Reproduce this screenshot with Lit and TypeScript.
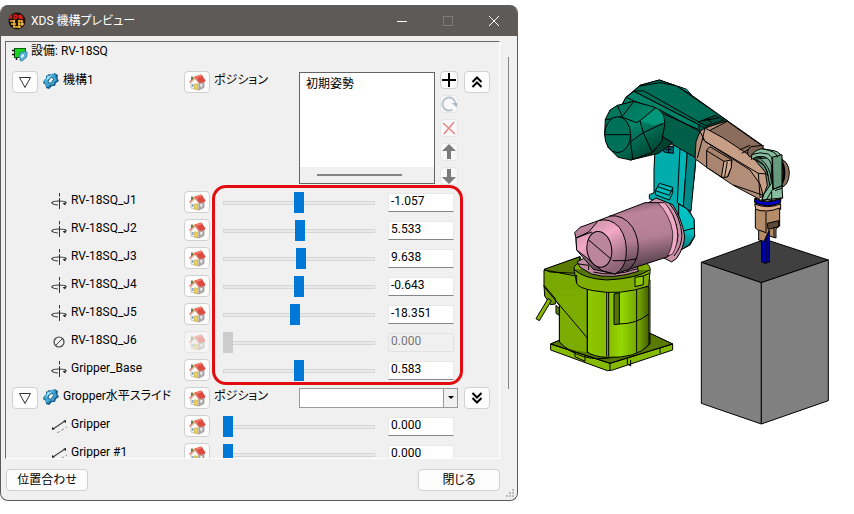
import { LitElement, html, css, svg } from "lit";
import { customElement } from "lit/decorators.js";

type Joint = { name: string; kind: "rotate" | "slide" | "fixed"; value: string; min: number; disabled?: boolean };

const armJoints: Joint[] = [
  { name: "RV-18SQ_J1", kind: "rotate", value: "-1.057", min: -360 },
  { name: "RV-18SQ_J2", kind: "rotate", value: "5.533", min: -360 },
  { name: "RV-18SQ_J3", kind: "rotate", value: "9.638", min: -360 },
  { name: "RV-18SQ_J4", kind: "rotate", value: "-0.643", min: -360 },
  { name: "RV-18SQ_J5", kind: "rotate", value: "-18.351", min: -360 },
  { name: "RV-18SQ_J6", kind: "fixed", value: "0.000", min: 0, disabled: true },
  { name: "Gripper_Base", kind: "rotate", value: "0.583", min: -360 },
];
const gripperJoints: Joint[] = [
  { name: "Gripper", kind: "slide", value: "0.000", min: 0 },
  { name: "Gripper #1", kind: "slide", value: "0.000", min: 0 },
];

const icon = (size: number, body: unknown) =>
  html`<svg width=${size} height=${size} viewBox="0 0 ${size} ${size}" aria-hidden="true">${body}</svg>`;

const homeIcon = icon(18, svg`
  <path d="M3 10L7 5.500L11 10V17L3 15Z" fill="#fbf8f2" stroke="#b9b4ab" stroke-width=".8"/>
  <path d="M11 17V9.500L16 8.500V14.500Z" fill="#b3afaa" stroke="#8c8782" stroke-width=".6"/>
  <path d="M6.500 11H9.500V16.800L6.500 16Z" fill="#f0d257" stroke="#b99a2a" stroke-width=".5"/>
  <rect x="3.800" y="11" width="1.800" height="3" fill="#8aa9d6"/>
  <rect x="12.300" y="11" width="2" height="2.500" fill="#eef0f5"/>
  <path d="M7 3.500L13.500 1.500L17.500 7.500L16.500 9L11.500 10Z" fill="#de4a3e"/>
  <path d="M7 3.500L13.500 1.500L14.500 3L8.500 5.500Z" fill="#ee7767"/>
  <path d="M1.500 9.500L7 4L11.500 10" fill="none" stroke="#e2745f" stroke-width="1.300"/>
  <path d="M3 3.500h2v2.500l-2 2z" fill="#73833b"/>`);
const rotateIcon = icon(16, svg`
  <path d="M8.500 0V3.500M8.500 5V16" stroke="#333" fill="none"/>
  <path d="M7 12Q1 11.500 .800 9.800Q1.500 8 8 8Q14.500 8 15.200 9.500Q15 10.500 13 11" stroke="#333" fill="none" stroke-width="1.200"/>
  <path d="M11.500 10.500L14.500 9.500V12.500Z" fill="#222"/>`);
const fixedIcon = icon(16, svg`
  <circle cx="8" cy="9" r="5" fill="none" stroke="#444" stroke-width="1.200"/><path d="M4.500 12.500L11.500 5.500" stroke="#444"/>`);
const slideIcon = icon(16, svg`
  <path d="M2 12L14 4" stroke="#444" stroke-width="1.200"/><path d="M1 13v-3l3 2zM15 3v3l-3-2z" fill="#222"/>
  <path d="M6 16L16 10" stroke="#888" stroke-dasharray="3 2"/>`);
const gearIcon = icon(16, svg`
  <path d="M6 1L9 2L11.500 0L15 2L14.500 5L16 8L13 10L12 13L9 13L6 16L3 15L3 12L0 10L1 7L3 6L3 3Z" fill="#17608c"/>
  <path d="M4 2L7 2.500L9.500 .500L12.500 1.500L12.500 4.500L14 7L11.500 9L10.500 12L7.500 11.500L5 14L2 13L2.500 10.500L.500 8.500L2 6L3.500 5Z" fill="#3fa6d2"/>
  <path d="M4.500 3.500L9 2.500L6 5.500L3 8Z" fill="#a9e3f4"/>
  <ellipse cx="7.800" cy="7.300" rx="2" ry="3.200" transform="rotate(40 7.800 7.300)" fill="#efefef" stroke="#0e5077" stroke-width=".8"/>`);
const equipmentIcon = icon(16, svg`
  <rect x="2.500" y="2.500" width="11" height="9" fill="#18d41c" stroke="#075c0b"/>
  <path d="M0 4.500h3M0 8.500h3M4.500 12v2" stroke="#111" stroke-width="1.500"/>
  <path d="M9 5.500l2 1 2-1.500 2 1v3l-1 3-2 1-1.500 2-2.500-.500v-2.500l-1.500-1.500 1-2z" fill="#58b3d6" stroke="#2d6f8f" stroke-width=".7"/>
  <ellipse cx="10.500" cy="10" rx="1.200" ry="2" transform="rotate(35 10.500 10)" fill="#e6f5fa"/>`);
const appIcon = icon(18, svg`
  <circle cx="9" cy="9" r="8.500" fill="#1c1109"/>
  <path d="M1.500 3.500l2.500 3M4 3.500l-2.500 3M6 3v3.500h2l1-2-1-1.500zM14 3.500h-3v1.500h3v1.500h-3" stroke="#e01b1b" stroke-width="1.300" fill="none"/>
  <path d="M2 9h5M10 9h5M3 12h5M6 8v7M11 8v8M10 12h6M5 15h8M14 9v5" stroke="#f2b832" stroke-width="1.500" fill="none"/>`);
const triangleIcon = icon(14, svg`<path d="M1.500 1.500H12.500L7 11.500Z" fill="#fff" stroke="#333"/>`);
const upChevrons = icon(14, svg`<path d="M2.500 7L7 2.500L11.500 7M2.500 12L7 7.500L11.500 12" fill="none" stroke="#000" stroke-width="2"/>`);
const downChevrons = icon(14, svg`<path d="M2.500 2L7 6.500L11.500 2M2.500 7L7 11.500L11.500 7" fill="none" stroke="#000" stroke-width="2"/>`);

const tools = [
  { label: "追加", off: false, body: svg`<path d="M8 1V15M1 8H15" stroke="#000" stroke-width="2"/>` },
  { label: "更新", off: true, body: svg`<path d="M11.500 13.500A6.500 6.500 0 1 1 14.500 7.500" fill="none" stroke="#b6c2ce" stroke-width="2"/><path d="M10.500 7H16V11.500Z" fill="#a9b8c6"/>` },
  { label: "削除", off: true, body: svg`<path d="M2 3L14 14M13 2L3 14" stroke="#e48686" stroke-width="1.500"/>` },
  { label: "上へ", off: true, body: svg`<path d="M8 0L15 7H10V15H6V7H1Z" fill="#7b7b7b"/>` },
  { label: "下へ", off: true, body: svg`<path d="M8 16L15 9H10V1H6V9H1Z" fill="#7b7b7b"/>` },
];

@customElement("robot-scene")
class RobotScene extends LitElement {
  static styles = css`
    :host { display: block; }
    .scene { display: block; width: 100%; height: auto; }
    .ink { stroke: #000; stroke-width: 3; stroke-linejoin: round; }
    .line { fill: none; }
  `;
  render() {
    return html`<svg class="scene" viewBox="518 0 336 514" role="img" aria-label="RV-18SQ">
      <defs>
        <linearGradient id="lime"><stop offset="0" stop-color="#8fc800"/><stop offset=".35" stop-color="#86ba00"/><stop offset=".55" stop-color="#94d800"/><stop offset=".85" stop-color="#6e9c00"/><stop offset="1" stop-color="#455f00"/></linearGradient>
        <linearGradient id="pink" x1="0" y1="0" x2=".25" y2="1"><stop offset="0" stop-color="#604450"/><stop offset=".28" stop-color="#bd8499"/><stop offset=".62" stop-color="#b57f93"/><stop offset="1" stop-color="#56404a"/></linearGradient>
        <linearGradient id="rose" x1="0" y1="0" x2=".5" y2="1"><stop offset="0" stop-color="#b9869a"/><stop offset=".45" stop-color="#f4a9c5"/><stop offset="1" stop-color="#8f6575"/></linearGradient>
        <linearGradient id="teal" x1="0" y1="0" x2=".7" y2="1"><stop offset="0" stop-color="#006b54"/><stop offset=".5" stop-color="#008468"/><stop offset="1" stop-color="#00412f"/></linearGradient>
        <linearGradient id="cyan" x1="0" y1="0" x2="0" y2="1"><stop offset="0" stop-color="#00c6c6"/><stop offset=".6" stop-color="#00bcbc"/><stop offset="1" stop-color="#006c6c"/></linearGradient>
      </defs>

      <g transform="translate(590 70) scale(.33333)" class="ink">
        <path d="M262 48L290 58L305 76L280 66Z" fill="#0aa"/>
        <path d="M195 235L270 225L318 262L314 310L300 426L312 450L314 500L300 525L262 545L230 410L178 386V374L192 368V300Z" fill="#00acac"/>
        <path d="M270 232L292 245L280 410L262 398Z" fill="#00b6b6"/>
        <path d="M292 245L318 262L303 424L280 410Z" fill="#008989"/>
        <path d="M266 402L290 416L312 446L314 498L296 526L266 544Z" fill="url(#cyan)"/>
        <path d="M282 482L314 474" class="line"/>
        <path d="M196 362L208 340L248 352V368L238 390L196 374Z" fill="#00baba"/>
        <path d="M196 362L238 376L248 354M204 350L244 364" class="line"/>
        <path d="M215 232L250 230V250L222 246ZM225 238H245M236 232V250" fill="#067"/>
      </g>

      <g transform="translate(530 190) scale(.33333)" class="ink">
        <path d="M62 462L90 450L360 430L428 462V480L245 541L232 542L62 480Z" fill="#86ba00"/>
        <path d="M62 462L90 450L360 430L428 462L240 520Z" fill="#587a00"/>
        <path d="M62 462L240 520L428 462M240 520V541M135 486V500L165 514V498M292 505V522L302 528V510M390 474V490" class="line"/>
        <path d="M42 240L150 200L180 290L180 470L90 456L88 346L42 288Z" fill="#79a800"/>
        <path d="M42 238L150 200L140 250L60 246Z" fill="#587b00"/>
        <path d="M42 240L138 258" class="line"/>
        <path d="M42 286L76 326V342L62 344L44 318Z" fill="#719b00"/>
        <path d="M54 326L64 332L28 392L18 386Z" fill="#87b900"/>
        <path d="M78 346L88 356V376L78 370Z" fill="#668d00"/>
        <path d="M88 296L172 298V486Q110 482 90 456Z" fill="#7cac00" stroke="none"/>
        <path d="M88 346V456Q150 520 250 502Q330 494 360 462V270H140" class="line"/>
        <path d="M172 290H357V464Q320 506 230 502Q190 500 172 486Z" fill="url(#lime)"/>
        <path d="M42 290L172 444M172 290V488M230 304V500M236 304V500M320 292V488" class="line"/>
        <path d="M252 312L268 308V402L252 404Z" fill="#547500"/>
        <path d="M268 402Q320 402 356 372" class="line"/>
        <path d="M132 238Q132 220 155 218L345 218Q364 226 360 246L356 288Q270 318 190 302Q145 294 140 280Z" fill="#7fae00"/>
        <path d="M132 238Q160 266 230 270Q320 266 358 240" fill="#547600"/>
        <path d="M140 255V280M315 262L340 258V284L315 290ZM340 258L358 250" fill="#8fc900"/>
        <path d="M142 215L160 206L320 220L325 244Q245 270 185 252L150 232Z" fill="#bf8ca0"/>
        <path d="M146 222L176 226V240M190 246Q250 262 322 236" class="line"/>

        <path d="M350 42L378 24L428 44Q455 85 464 138Q462 174 440 205L425 216L398 202Z" fill="#ca92a8"/>
        <path d="M138 145L134 128L150 112L205 92L345 38L400 38Q438 70 444 136Q442 176 414 200L255 252L190 238L140 180Z" fill="url(#pink)"/>
        <path d="M384 38Q420 76 428 126Q430 170 412 198L428 192Q446 160 442 122Q434 72 404 38Z" fill="#f2a9c5" stroke-width="2"/>
        <path d="M418 40Q452 80 456 136Q454 172 432 198" class="line"/>
        <path d="M238 78Q280 72 308 112Q328 148 324 186Q318 224 290 244" class="line"/>
        <path d="M205 92Q240 82 268 112Q294 148 288 200Q284 236 255 252L216 242L172 205L140 180L138 144L176 126Z" fill="url(#rose)"/>
        <ellipse cx="208" cy="178" rx="37" ry="54" fill="#bb859a" transform="rotate(-8 208 178)"/>
        <path d="M174 148L244 208M138 144L186 126M248 212H288M288 212L322 206" class="line"/>
      </g>

      <g transform="translate(590 70) scale(.33333)" class="ink">
        <path d="M96 104L108 82L150 46L208 30L260 48L300 72L412 152L330 190L318 264L246 222L122 270L170 160Z" fill="#005f49"/>
        <path d="M132 64L150 46L208 30L260 48L412 152L344 174L326 164Z" fill="#006e56"/>
        <path d="M96 104L108 82L132 64L326 164L328 184L210 120L130 94Z" fill="#008168"/>
        <path d="M108 82L325 178M132 64L160 62L330 158M150 48L210 38L254 46" class="line"/>
        <path d="M325 156L375 136L402 150L348 168ZM338 152L385 144M350 146L366 158" fill="#00503f"/>
        <path d="M190 246L218 200L248 218L206 250L122 270Z" fill="#00422f"/>
        <path d="M44 190L46 148L60 120L82 106L130 94L195 112L218 130L225 160L215 215L186 248L122 270L84 262L54 232Z" fill="url(#teal)"/>
        <path d="M150 152L200 116Q224 130 222 158L190 166Z" fill="#00977a" stroke="none"/>
        <path d="M46 150L92 140L140 158L150 152L196 114M82 106L96 138M130 96L96 140M150 152L160 188L220 160M160 188L122 215M160 188L186 246M122 215L128 268" class="line"/>
        <ellipse cx="83" cy="194" rx="39" ry="54" fill="#007058"/>
        <path d="M45 194H122V212" class="line"/>
      </g>

      <g transform="translate(590 70) scale(.33333)" class="ink">
        <path d="M560 262Q598 270 598 310Q596 344 576 352Z" fill="#8c705f"/>
        <path d="M576 275Q590 310 576 340" class="line" stroke-width="7"/>
        <path d="M330 184L345 174L412 152L516 225L480 280L534 322L528 374L505 386L430 346L350 292L315 266L318 215Z" fill="#b28e78"/>
        <path d="M354 184L412 154L514 226L488 262L448 240Z" fill="#8a6d5c"/>
        <path d="M484 266Q482 246 500 240L560 250L578 384L516 390L522 350L500 290Z" fill="#5f9077"/>
        <path d="M330 184L345 174L400 204L488 262L526 306L532 346L520 378L510 342L480 300L345 214Z" fill="#c79e86"/>
        <path d="M345 174L338 205L322 264M345 214L505 310L532 312M505 310L510 380M338 205L345 214M430 345L520 376M448 240L480 226M455 250L480 236" class="line"/>
        <path d="M350 240L360 230L426 270L424 290L414 320L396 322L350 292Z" fill="#a9846f"/>
        <path d="M402 274L424 270L424 292L412 321L394 322ZM350 242L402 274M412 275L404 320" fill="#d4aa90"/>
        <path d="M478 260Q465 245 482 230L520 226L515 262Z" fill="#7c6354"/>
        <path d="M490 268Q520 270 532 306L540 348L552 330L548 262Z" fill="#79ae92"/>
        <path d="M500 272Q530 284 534 318M512 268Q540 288 544 330" class="line"/>
        <path d="M484 268Q482 244 515 236L552 242Q576 248 576 270V350L578 384L516 390L522 372L544 340V284Q540 266 522 260Q500 256 484 268Z" fill="#88bea0"/>
        <path d="M546 262L576 254V348L550 358Z" fill="#659a7d"/>
        <path d="M484 254Q510 244 535 252Q548 260 548 278V358L530 388M515 236Q562 244 562 262M550 358L578 346M545 366V390M555 362L578 354" class="line"/>
        <path d="M495 384Q530 402 573 384L568 412L500 412Z" fill="#b48d70"/>
        <path d="M494 386Q530 406 572 386V398Q532 416 494 398Z" fill="#0000c8"/>
        <path d="M494 402Q532 418 572 402V418Q534 430 498 420Z" fill="#d9ad88"/>
      </g>

      <g transform="translate(690 180) scale(.33333)" class="ink">
        <path d="M34 247L225 178L415 240L214 308Z" fill="#404040"/>
        <path d="M34 247L214 308V732L34 670Z" fill="#808080"/>
        <path d="M214 308L415 240V662L214 732Z" fill="#808080"/>
        <path d="M215 155H238V246L227 250L215 246Z" fill="#0000b0"/>
        <path d="M228 160V248" class="line"/>
        <path d="M196 88Q230 100 269 84V138L258 146V174L238 168V150L222 184L206 180V152L196 144Z" fill="#b48c6a"/>
        <path d="M228 96V160M206 150L228 158M232 130L266 122V140L234 148ZM252 142V172" fill="#5f4937"/>
      </g>
    </svg>`;
  }
}

@customElement("app-root")
class AppRoot extends LitElement {
  static styles = css`
    :host { display: block; background: #fff; color: #000; font: 12px/18px Roboto, "Noto Sans CJK JP", sans-serif; font-feature-settings: "palt"; }
    * { box-sizing: border-box; }
    svg { display: block; flex: none; }
    button { display: grid; place-items: center; padding: 0; background: #fdfdfd; border: 1px solid #d0d0d0; border-radius: 4px; color: #000; font: inherit; }
    .page { display: grid; grid-template-columns: minmax(0, 518fr) minmax(0, 336fr); height: 100vh; }
    .window { display: flex; flex-direction: column; min-height: 0; margin: 5px 0 13px; border: 1px solid #5d5a58; border-top: 0; border-radius: 8px; background: #f0f0f0; overflow: hidden; position: relative; }
    .titlebar { display: flex; align-items: center; flex: none; height: 31px; padding-left: 7px; background: #5d5a58; color: #fff; }
    .title { flex: 1; margin: 0 0 0 5px; font-size: 12px; font-weight: 400; }
    .caption { width: 46px; height: 30px; border: 0; border-radius: 0; background: none; }
    .content { display: flex; flex: 1; min-height: 0; padding: 5px 8px 0 4px; }
    .panel { flex: 1; min-width: 0; overflow: hidden; padding: 0 9px 0 6px; border: solid; border-width: 1px; border-color: #696969 #fff #fff #696969; }
    .bar { flex: none; width: 1px; margin: 16px 0 70px 8px; background: #858585; }
    .equipment { display: flex; gap: 3px; height: 29px; }
    .equipment svg { margin-top: 4px; }
    .group, .joint { display: grid; align-items: start; }
    .group { grid-template-columns: 172px 26px 4px 85px minmax(0, 1fr) 5px 18px 6px 26px; }
    .first { height: 120px; }
    .second { height: 28px; }
    .joint { grid-template-columns: 172px 26px 13px minmax(0, 1fr) 13px 66px 36px; height: 28px; }
    .name { display: flex; gap: 4px; white-space: nowrap; }
    .name svg { margin-top: 2px; }
    .group .name button { margin-right: 1px; }
    .joint .name { padding-left: 39px; }
    .square { width: 26px; height: 22px; }
    .home:disabled { opacity: .4; }
    .poslabel { grid-column: 4; }
    .poses { display: flex; flex-direction: column; height: 112px; margin-top: 1px; border: 1px solid #646464; background: #fff; }
    .list { flex: 1; min-height: 0; padding: 1px 0; border: 0; outline: 0; background: #fff; font: inherit; overflow: hidden; scrollbar-width: none; }
    .list option { padding: 0 6px; min-height: 18px; }
    .hscroll { display: flex; align-items: center; height: 16px; padding: 0 32px 0 17px; background: #f0f0f0; }
    .hthumb { flex: 1; height: 2px; background: #858585; }
    .tools { grid-column: 7; display: flex; flex-direction: column; gap: 6px; }
    .tool { width: 18px; height: 18px; }
    .tool:disabled { border-color: #e6e6e6; background: #f8f8f8; }
    .expand { grid-column: 9; }
    .combo { grid-column: 5 / 8; display: grid; grid-template-columns: 1fr 14px; height: 20px; margin-top: 1px; border: 1px solid #999; background: #fff; }
    .combo select { grid-area: 1 / 1 / 2 / 3; min-width: 0; padding: 0 20px 0 4px; border: 0; appearance: none; background: none; font: inherit; }
    .arrow { grid-area: 1 / 2; display: grid; place-items: center; border-left: 1px solid #999; background: #f0f0f0; pointer-events: none; }
    .joints { position: relative; }
    .highlight { position: absolute; top: -6px; right: 27px; bottom: 2px; left: 200px; border: 3px solid #e00c10; border-radius: 14px; pointer-events: none; }
    .slider { grid-column: 4; appearance: none; width: 100%; height: 22px; margin: 1px 0 0; background: none; }
    .slider::-webkit-slider-runnable-track { height: 4px; background: #e7eaea; box-shadow: inset 0 0 0 1px #d6d6d6; }
    .slider::-webkit-slider-thumb { appearance: none; width: 10px; height: 21px; margin-top: -9px; background: #0078d7; }
    .slider:disabled::-webkit-slider-thumb { background: #ccc; }
    .value { grid-column: 6; width: 100%; height: 19px; margin: 2px 0 0; padding: 0 2px 4px; border: 1px solid #e8e8e8; border-bottom-color: #858585; border-radius: 1px; background: #fff; color: #000; font: inherit; line-height: 13px; }
    .value:disabled { background: #f0f0f0; border-color: #e2e2e2; color: #777; }
    .footer { display: flex; justify-content: space-between; flex: none; padding: 10px 17px 9px 5px; }
    .action { width: 82px; height: 22px; }
    .grip { position: absolute; right: 2px; bottom: 2px; }
  `;

  private glyph(kind: Joint["kind"]) {
    return kind === "rotate" ? rotateIcon : kind === "slide" ? slideIcon : fixedIcon;
  }

  private joint(j: Joint, id: string) {
    return html`<div class="joint">
      <label class="name" for=${id}>${this.glyph(j.kind)}<span>${j.name}</span></label>
      <button class="square home" aria-label="${j.name} ホーム" ?disabled=${j.disabled}>${homeIcon}</button>
      <input class="slider" type="range" min=${j.min} max="360" step="any" .value=${j.value} aria-label=${j.name} ?disabled=${j.disabled}>
      <input class="value" id=${id} type="text" .value=${j.value} ?disabled=${j.disabled}>
    </div>`;
  }

  render() {
    return html`<main class="page">
      <section class="window">
        <header class="titlebar">
          ${appIcon}
          <h1 class="title">XDS 機構プレビュー</h1>
          <button class="caption" aria-label="最小化">${icon(10, svg`<path d="M0 5.500H10" stroke="#fff"/>`)}</button>
          <button class="caption" aria-label="最大化" disabled>${icon(10, svg`<rect x=".5" y=".5" width="9" height="9" fill="none" stroke="#7d7a78"/>`)}</button>
          <button class="caption" aria-label="閉じる">${icon(10, svg`<path d="M0 0L10 10M10 0L0 10" stroke="#fff"/>`)}</button>
        </header>
        <div class="content">
          <div class="panel">
            <div class="equipment">${equipmentIcon}<span>設備: RV-18SQ</span></div>
            <div class="group first">
              <div class="name"><button class="square" aria-label="折りたたむ">${triangleIcon}</button>${gearIcon}<span>機構1</span></div>
              <button class="square home" aria-label="ホーム">${homeIcon}</button>
              <label class="poslabel" for="poses">ポジション</label>
              <div class="poses">
                <select class="list" id="poses" size="5"><option>初期姿勢</option></select>
                <div class="hscroll"><div class="hthumb"></div></div>
              </div>
              <div class="tools">
                ${tools.map((t) => html`<button class="tool" aria-label=${t.label} ?disabled=${t.off}>${icon(16, t.body)}</button>`)}
              </div>
              <button class="square expand" aria-label="縮小">${upChevrons}</button>
            </div>
            <div class="joints">
              ${armJoints.map((j, i) => this.joint(j, `arm${i}`))}
              <div class="highlight"></div>
            </div>
            <div class="group second">
              <div class="name"><button class="square" aria-label="折りたたむ">${triangleIcon}</button>${gearIcon}<span>Gropper水平スライド</span></div>
              <button class="square home" aria-label="ホーム">${homeIcon}</button>
              <label class="poslabel" for="pose">ポジション</label>
              <div class="combo">
                <select id="pose"><option></option></select>
                <span class="arrow">${icon(6, svg`<path d="M0 1H6L3 4Z"/>`)}</span>
              </div>
              <button class="square expand" aria-label="展開">${downChevrons}</button>
            </div>
            ${gripperJoints.map((j, i) => this.joint(j, `grip${i}`))}
          </div>
          <div class="bar"></div>
        </div>
        <footer class="footer">
          <button class="action">位置合わせ</button>
          <button class="action">閉じる</button>
        </footer>
        <svg class="grip" width="9" height="9" viewBox="0 0 9 9" aria-hidden="true"><path d="M6 0h2v2h-2zM3 3h2v2h-2zM6 3h2v2h-2zM0 6h2v2h-2zM3 6h2v2h-2zM6 6h2v2h-2z" fill="#bbb"/></svg>
      </section>
      <robot-scene></robot-scene>
    </main>`;
  }
}
